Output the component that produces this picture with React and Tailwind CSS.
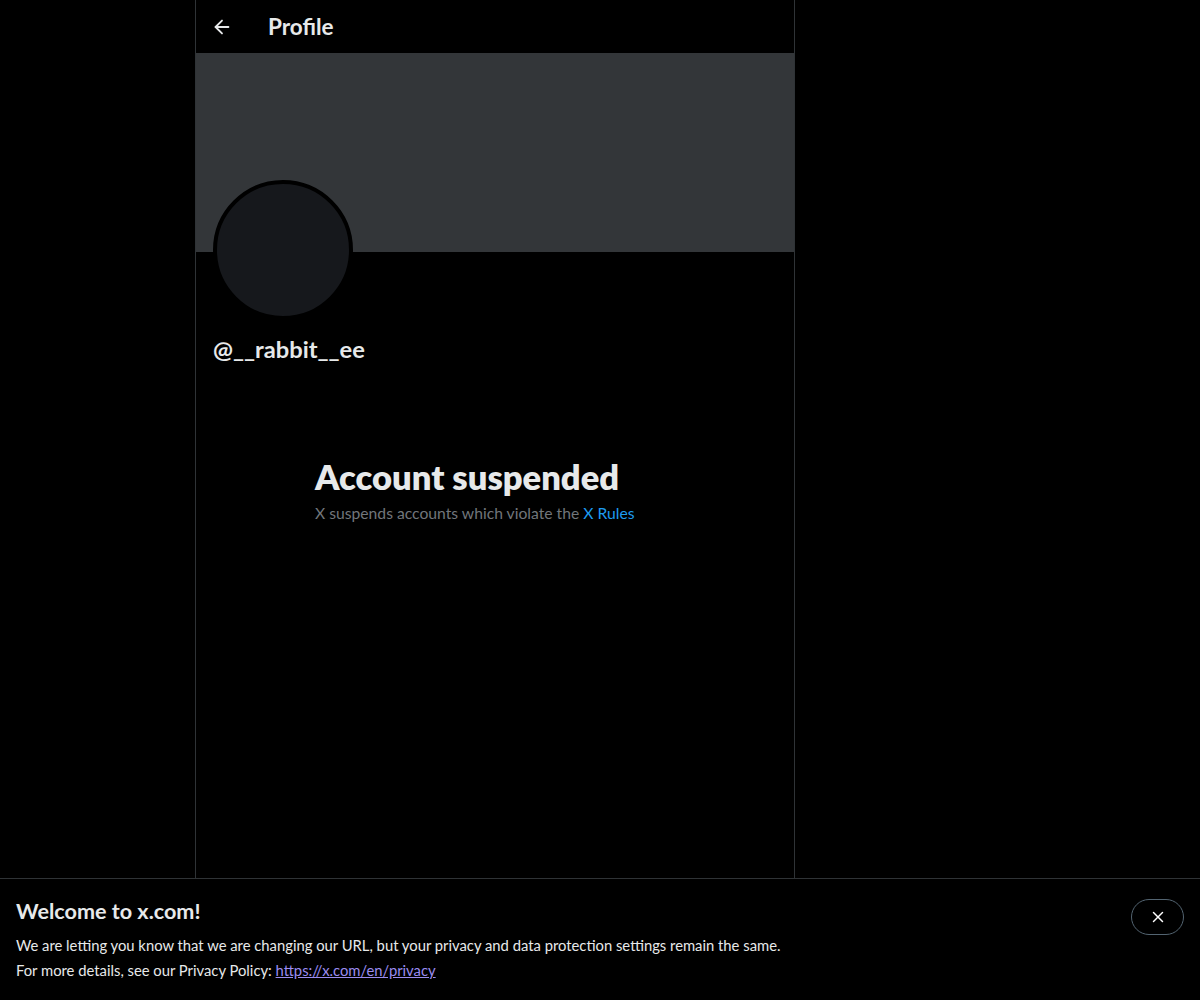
import React from 'react';
import { ArrowLeft, X } from 'lucide-react';

const App = () => {
  return (
    <div className="h-screen flex flex-col bg-black text-[#e7e9ea] overflow-hidden" style={{ fontFamily: 'Lato, "Noto Sans", sans-serif' }}>
      {/* Main column */}
      <div className="flex-1 flex min-h-0">
        <div className="w-[195px] shrink-0"></div>
        <div className="w-[600px] shrink-0 border-x border-[#2f3336] flex flex-col">
          {/* Header */}
          <div className="h-[53px] flex items-center px-4 shrink-0">
            <div className="w-[20px] h-[20px] flex items-center justify-center">
              <ArrowLeft className="w-[22px] h-[22px] shrink-0" strokeWidth={2} />
            </div>
            <h2 className="ml-[36px] text-[22.5px] font-bold leading-6">Profile</h2>
          </div>

          {/* Banner */}
          <div className="h-[199px] bg-[#333639] shrink-0"></div>

          {/* Avatar + handle */}
          <div className="px-4">
            <div className="mt-[-72px] ml-[1px] w-[140px] h-[140px] rounded-full bg-[#16181c] border-4 border-black"></div>
            <div className="mt-[17px] ml-[1px] text-[23.7px] font-bold leading-6">@__rabbit__ee</div>
          </div>

          {/* Suspended message */}
          <div className="mt-[98px] pl-[119px]">
            <h1 className="text-[34.5px] font-extrabold leading-9">Account suspended</h1>
            <p className="mt-[7px] text-[15.7px] text-[#71767b]">
              X suspends accounts which violate the <span className="text-[#1d9bf0]">X Rules</span>
            </p>
          </div>
        </div>
      </div>

      {/* Bottom notice */}
      <div className="h-[122px] shrink-0 border-t border-[#2f3336] bg-black flex justify-between px-4 pt-[18px]">
        <div>
          <h3 className="text-[21.6px] font-bold leading-7">Welcome to x.com!</h3>
          <p className="mt-[8px] text-[14.8px] leading-[25px]">
            We are letting you know that we are changing our URL, but your privacy and data protection settings remain the same.
            <br />
            For more details, see our Privacy Policy: <span className="text-[#9b8cf0] underline">https://x.com/en/privacy</span>
          </p>
        </div>
        <button className="w-[53px] h-[36px] mt-[2px] rounded-full border border-[#536471] flex items-center justify-center">
          <X className="w-[18px] h-[18px] text-white" strokeWidth={2} />
        </button>
      </div>
    </div>
  );
};

export default App;
